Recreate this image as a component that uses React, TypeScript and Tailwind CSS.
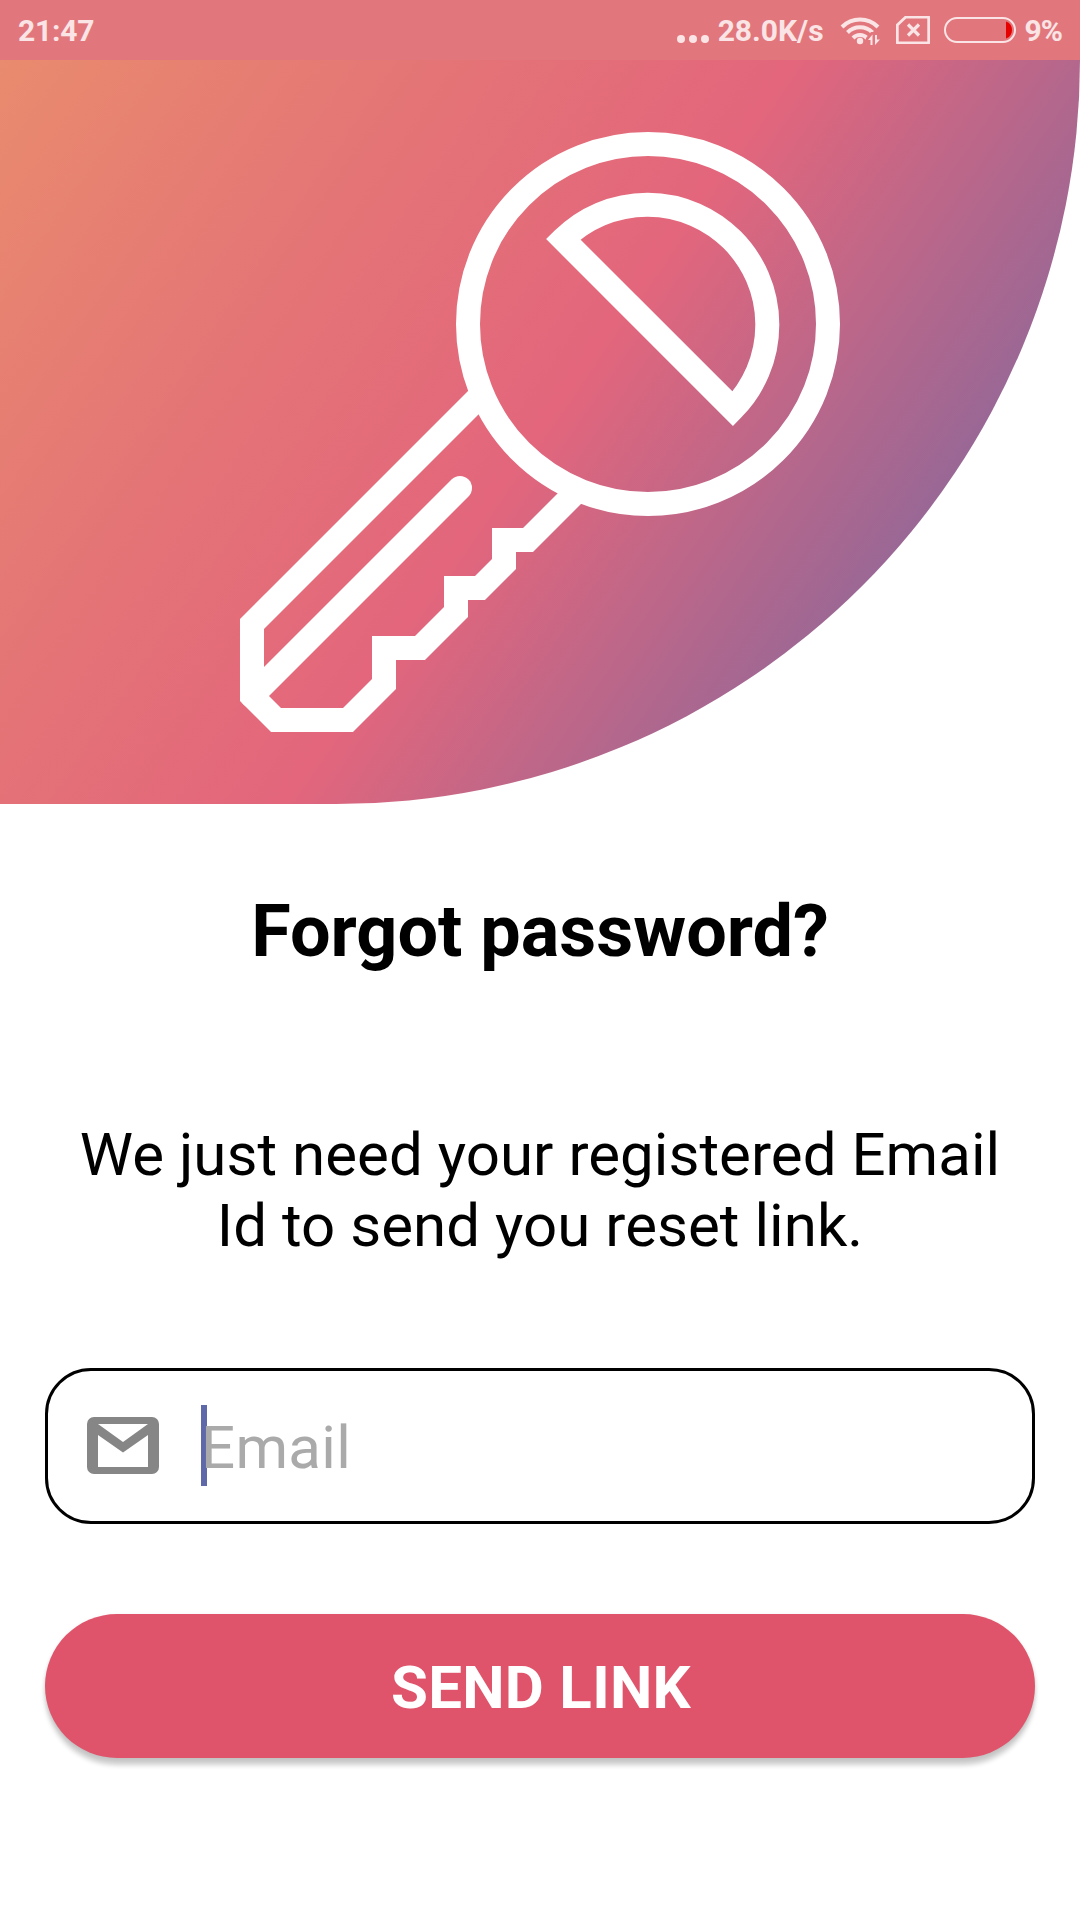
import React from "react";

function WifiIcon() {
  return (
    <svg className="ml-[16px] block h-[30px] w-[42px] shrink-0" viewBox="840 14 42 30" fill="none" stroke="currentColor" strokeWidth="4">
      <path d="M842 26 A25.5 25.5 0 0 1 878 26" />
      <path d="M847.5 31.5 A17.5 17.5 0 0 1 872.5 31.5" />
      <path d="M853 37 A9.8 9.8 0 0 1 867 37" />
      <circle cx="860" cy="40" r="3.2" fill="currentColor" stroke="none" />
      <path d="M866 37 L871 31 H881 V45 H866 Z" fill="#e1777c" stroke="none" />
      <path d="M868 39 L872.5 33.5 V44 H870.5 V39 Z M875 34 H877 V38.5 H880 L875 44 Z" fill="currentColor" stroke="none" />
    </svg>
  );
}

function NoSimIcon() {
  return (
    <svg className="ml-[14px] block h-[28px] w-[34px] shrink-0" viewBox="896 15 34 28" fill="none" stroke="currentColor">
      <path d="M905.5 16.2 H928.7 V41.8 H897.3 V24 Z" strokeWidth="2.8" strokeLinejoin="round" />
      <path d="M908 23.5 L919 34.5 M919 23.5 L908 34.5" strokeWidth="3.2" />
    </svg>
  );
}

function BatteryIcon() {
  return (
    <svg className="ml-[14px] block h-[26px] w-[72px] shrink-0" viewBox="0 0 72 26" fill="none">
      <rect x="1" y="1" width="70" height="24" rx="12" stroke="currentColor" strokeWidth="2" />
      <path d="M62 4.5 C70 7 70 19 62 21.5 Z" fill="#e60000" />
    </svg>
  );
}

function StatusBar() {
  return (
    <header className="flex h-[60px] items-center bg-[#e1777c] pr-[18px] pl-[18px] text-[30px] leading-none font-bold text-[#fae4e5]">
      <span className="mt-[2px] tracking-[-0.2px]">21:47</span>
      <div className="ml-auto flex items-center">
        <div className="mt-[18px] mr-[9px] flex gap-[4px]">
          <i className="size-2 rounded-full bg-[#fae4e5]" />
          <i className="size-2 rounded-full bg-[#fae4e5]" />
          <i className="size-2 rounded-full bg-[#fae4e5]" />
        </div>
        <span className="mt-[2px]">28.0K/s</span>
        <WifiIcon />
        <NoSimIcon />
        <BatteryIcon />
        <span className="mt-[2px] ml-[9px] tracking-[-1px]">9%</span>
      </div>
    </header>
  );
}

function KeyIcon() {
  return (
    <svg className="block size-[600px]" viewBox="240 132 600 600" fill="none" stroke="#fff" strokeWidth="24" strokeMiterlimit="10">
      <circle cx="648" cy="324" r="180" />
      <path d="M563.15 239.15 A120 120 0 0 1 732.85 408.85 Z" />
      <path d="M478 398 L252 624 V696 L276 720 H348 L384 684 V648 H420 L456 612 V588 H480 L504 564 V540 H528 L576 492" />
      <path d="M460 488 L252 696" strokeLinecap="round" />
    </svg>
  );
}

function MailIcon() {
  return (
    <svg className="-mt-[2px] block h-[57px] w-[72px]" viewBox="0 0 72 57" fill="#868686">
      <path fillRule="evenodd" d="M7 0 H65 A7 7 0 0 1 72 7 V50 A7 7 0 0 1 65 57 H7 A7 7 0 0 1 0 50 V7 A7 7 0 0 1 7 0 Z M11 7 L36 25 L61 7 Z M11 18 V50 H61 V18 L36 35.5 Z" />
    </svg>
  );
}

export default function App() {
  return (
    <div className="h-[1920px] w-[1080px] overflow-hidden bg-white font-['Roboto',sans-serif] text-black">
      <StatusBar />
      <section className="flex h-[744px] items-center justify-center rounded-br-[744px] bg-[linear-gradient(124.56deg,#e98b6e_0%,#e47476_28%,#e3667c_50%,#5f69a9_100%)]">
        <KeyIcon />
      </section>
      <main className="flex flex-col px-[45px]">
        <h1 className="mt-[86px] text-center text-[72px] leading-[84px] font-bold">Forgot password?</h1>
        <p className="mt-[145px] text-center text-[60px] leading-[71px] tracking-[0.04px]">
          We just need your registered Email
          <br />
          Id to send you reset link.
        </p>
        <div className="mt-[107px] flex h-[156px] items-center rounded-[46px] border-[3px] border-black pl-[39px]">
          <MailIcon />
          <div className="-mt-[2px] ml-[42px] h-[81px] w-[6px] bg-[#5f69a9]" />
          <span className="mt-[4px] -ml-[6px] text-[60px] leading-[70px] tracking-[0.3px] text-[#aaaaaa]">Email</span>
        </div>
        <button className="mt-[90px] h-[144px] rounded-full bg-[#df546a] pt-[4px] pl-[2px] text-[60px] leading-none font-bold tracking-[0.3px] text-white shadow-[0_7px_5px_rgba(0,0,0,0.2),0_1px_4px_rgba(0,0,0,0.08)]">
          SEND LINK
        </button>
      </main>
    </div>
  );
}
